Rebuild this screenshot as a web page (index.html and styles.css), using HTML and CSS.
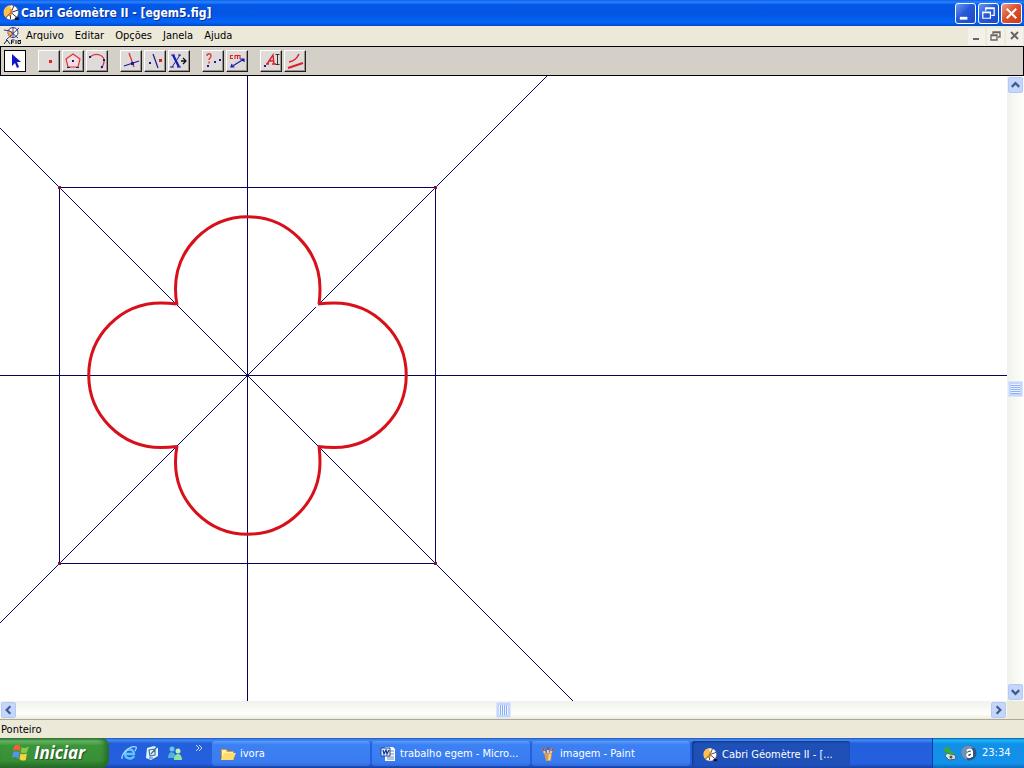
FILE: index.html
```html
<!DOCTYPE html>
<html lang="pt-BR">
<head>
<meta charset="utf-8">
<title>Cabri Géomètre II - [egem5.fig]</title>
<link rel="stylesheet" href="styles.css">
</head>
<body>
<svg class="defs" aria-hidden="true">
  <defs>
    <symbol id="cabri" viewBox="0 0 18 18">
      <circle cx="9" cy="8.500" r="7.500" fill="#fff" stroke="#5a4a60" stroke-width=".6"/>
      <path d="M8.500 2C4 2 2 5 2 8.500c0 2 1 4 2 5L9 9z" fill="#ffc04a"/>
      <path d="M9 8.500L12 1.500M9 8.500L3.500 14M9 8.500l7-2.500M9 8.500l6 5M8.500 8.500V15" stroke="#2b1730" stroke-width=".9"/>
      <path d="M9 5v5l-2 2" fill="none" stroke="#e28a25" stroke-width="1.500"/>
      <path d="M13 13.500h4v2.500h-4z" fill="#171320"/>
    </symbol>
    <symbol id="chevron" viewBox="0 0 14 14"><path d="M3 9l4-4 4 4" fill="none" stroke="#405b90" stroke-width="2.400"/></symbol>
  </defs>
</svg>
<div class="screen">
  <header class="titlebar">
    <svg class="icon18"><use href="#cabri"/></svg>
    <h1 class="title">Cabri Géomètre II - [egem5.fig]</h1>
    <div class="winbuttons">
      <button class="winbtn" aria-label="Minimizar"><svg viewBox="0 0 20 20"><path d="M4 15h8" stroke="#fff" stroke-width="3"/></svg></button>
      <button class="winbtn" aria-label="Restaurar"><svg viewBox="0 0 20 20"><path d="M7 7V4h9v8h-3M7 5h9" fill="none" stroke="#fff" stroke-width="1.300"/><path d="M4 8.500h8V15H4zM4 9h8" fill="none" stroke="#fff" stroke-width="1.300"/></svg></button>
      <button class="winbtn close" aria-label="Fechar"><svg viewBox="0 0 20 20"><path d="M5 5l10 10M15 5L5 15" stroke="#fff" stroke-width="2.200"/></svg></button>
    </div>
  </header>

  <nav class="menubar" aria-label="Menu">
    <svg class="icon18" viewBox="0 0 18 18">
      <circle cx="10" cy="5.500" r="5" fill="#fffbe0" stroke="#33339a"/>
      <path d="M5 4h4v5H6z" fill="#ffae35"/>
      <path d="M1 3l6 1 8 7M16 1L3 13M10 1v9" fill="none" stroke="#202090" stroke-width=".9"/>
      <path d="M1 17l3-4 3 4M8.500 17v-4h3M8 15h3M13 13v4M18 13.500h-3v3h2.500v-2h-1" fill="none" stroke="#15152a"/>
    </svg>
    <div class="menus">
      <button class="menu">Arquivo</button>
      <button class="menu">Editar</button>
      <button class="menu">Opções</button>
      <button class="menu">Janela</button>
      <button class="menu">Ajuda</button>
    </div>
    <div class="docbuttons">
      <button class="docbtn" aria-label="Minimizar documento"><svg viewBox="0 0 16 16"><path d="M5 11h6" stroke="#666" stroke-width="2"/></svg></button>
      <button class="docbtn" aria-label="Restaurar documento"><svg viewBox="0 0 16 16"><path d="M6 6V4h7v5h-2M6 4.500h7" fill="none" stroke="#666" stroke-width="1.300"/><path d="M4 7h6v5H4zM4 7.500h6" fill="none" stroke="#666" stroke-width="1.300"/></svg></button>
      <button class="docbtn" aria-label="Fechar documento"><svg viewBox="0 0 16 16"><path d="M5 4l7 7M12 4l-7 7" stroke="#666" stroke-width="2"/></svg></button>
    </div>
  </nav>

  <div class="toolbar" role="toolbar" aria-label="Ferramentas">
    <div class="group">
      <button class="tool active" aria-label="Ponteiro"><svg viewBox="0 0 20 20"><path d="M7 3v12l3-3 2 5 2-1-2-5h4z" fill="#1414c8"/></svg></button>
    </div>
    <div class="group">
      <button class="tool" aria-label="Ponto"><svg viewBox="0 0 20 20"><path d="M10 9h3v3h-3z" fill="#e0202a"/></svg></button>
      <button class="tool" aria-label="Polígono"><svg viewBox="0 0 20 20"><path d="M10 3l7 5-2 8H5L3 8z" fill="#f6dede" stroke="#e0303a" stroke-width="1.200"/><path d="M9 9h2v2H9zM4 16h3v1H4zM13 16h3v1h-3z" fill="#1a1a90"/></svg></button>
      <button class="tool" aria-label="Arco"><svg viewBox="0 0 20 20"><path d="M3 6c6-5 15-2 14 5 0 3-1 4-3 6" fill="none" stroke="#e0303a" stroke-width="1.300"/><path d="M2 5h2v2H2zM16 8h2v2h-2zM14 15h2v2h-2z" fill="#1a1a90"/></svg></button>
    </div>
    <div class="group">
      <button class="tool" aria-label="Reta perpendicular"><svg viewBox="0 0 20 20"><path d="M8 2l5 14" stroke="#e0303a" stroke-width="1.300"/><path d="M3 15l15-5" stroke="#1a1a9a" stroke-width="1.300"/><path d="M10 11h3v3h-3z" fill="#1a1a9a"/></svg></button>
      <button class="tool" aria-label="Simetria"><svg viewBox="0 0 20 20"><path d="M8 3l5 14" stroke="#1a1a9a" stroke-width="1.200"/><path d="M4 11h2v2H4z" fill="#1a1a9a"/><path d="M14 8h3v3h-3z" fill="#e0202a"/></svg></button>
      <button class="tool" aria-label="Macro"><svg viewBox="0 0 20 20"><path d="M4 4l6 12" stroke="#1a1ab4" stroke-width="2.200"/><path d="M11 4L3 16M2 4h4M9 4h3M1 16h4M8 16h4" stroke="#1a1ab4"/><path d="M12 10h5M14 7l3 3-3 3" fill="none" stroke="#111" stroke-width="1.300"/></svg></button>
    </div>
    <div class="group">
      <button class="tool" aria-label="Propriedade"><svg viewBox="0 0 20 20"><path d="M4 5c0-3 4-3 4 0 0 2-2 2-2 4M6 10.500v2" fill="none" stroke="#dc4040" stroke-width="1.400"/><path d="M4 14h2v2H4zM11 10h2v2h-2zM16 8h2v2h-2z" fill="#1a1a9a"/></svg></button>
      <button class="tool" aria-label="Medida"><svg viewBox="0 0 20 20"><path d="M6 4.500H3.500v3H6M8 8V4.500h5V8M10.500 4.500V8" fill="none" stroke="#e0202a" stroke-width="1.100"/><path d="M4 16L17 8M5 13l-1 3h3.500M13 8h4v3" fill="none" stroke="#1a1aaa" stroke-width="1.200"/></svg></button>
    </div>
    <div class="group">
      <button class="tool" aria-label="Rótulo"><svg viewBox="0 0 20 20"><path d="M6 13l6-9 1 9M8 10h5M5 13h3M11 13h4" fill="none" stroke="#dc202a" stroke-width="1.400"/><path d="M14.500 3.500h4M16.500 3.500v10M14.500 13.500h4" stroke="#333"/><path d="M3 14h2v2H3z" fill="#1a1a9a"/></svg></button>
      <button class="tool" aria-label="Aparência"><svg viewBox="0 0 20 20"><path d="M4 11c6-1 8-4 10-8" fill="none" stroke="#dc202a" stroke-width="1.600"/><path d="M3 17l15-5" stroke="#dc202a" stroke-width="2"/></svg></button>
    </div>
  </div>

  <main class="workspace">
    <svg class="figure" role="img" aria-label="Quadrifólio inscrito em um quadrado">
      <g class="construction">
        <path d="M247.500 0V4000M0 299.500H4000M59.500 111.500h376v376h-376z"/>
        <path d="M0 52L3000 3052M0 547L547 0"/>
      </g>
      <path class="vertices" d="M58 110h3v3h-3zM434 110h3v3h-3zM58 486h3v3h-3zM434 486h3v3h-3z"/>
      <path class="gap" d="M316 231L319 228"/>
      <path class="clover" d="M177 229Q175.500 221 175.500 213A72 72 0 0 1 320 213Q320 221 319 228M318 228Q326 227 334 227A72 72 0 0 1 334 371.500Q326 371.500 318 370.500M319 370Q320 378 320 386A72 72 0 0 1 175.500 386Q175.500 378 177 370M177 370.500Q169 371.500 161 371.500A72 72 0 0 1 161 227Q169 227 177 228"/>
    </svg>
    <div class="scroll vertical">
      <button class="scrollbtn" aria-label="Rolar para cima"><svg><use href="#chevron"/></svg></button>
      <div class="thumb"></div>
      <button class="scrollbtn down" aria-label="Rolar para baixo"><svg><use href="#chevron"/></svg></button>
    </div>
    <div class="scroll horizontal">
      <button class="scrollbtn left" aria-label="Rolar para a esquerda"><svg><use href="#chevron"/></svg></button>
      <div class="thumb"></div>
      <button class="scrollbtn right" aria-label="Rolar para a direita"><svg><use href="#chevron"/></svg></button>
    </div>
    <div class="corner"></div>
  </main>

  <div class="status" role="status">Ponteiro</div>

  <footer class="taskbar">
    <button class="start">
      <svg class="flag" viewBox="0 0 18 18"><path d="M3 3c2-2 4-2 6 0L8 8C6 6 4 6 2 8z" fill="#f26131"/><path d="M10 4c2 1 4 1 7-1l-2 6c-2 1-4 1-6 0z" fill="#87c94b"/><path d="M2 9c2-2 4-1 6 0l-1 6c-2-2-4-2-6-1z" fill="#5b91ee"/><path d="M9 10c2 1 4 1 6 0l-1 6c-2 1-5 1-6-1z" fill="#fbd23f"/></svg>
      <span>Iniciar</span>
    </button>
    <div class="quick">
      <button class="quickbtn" aria-label="Internet Explorer"><svg viewBox="0 0 16 16"><path d="M13 11c-2 4-9 3-9-2 0-6 9-6 9 0H4" fill="none" stroke="#65c5fb" stroke-width="2.300"/><path d="M1 14C0 9 9 0 15 2c1 1 0 2-1 4" fill="none" stroke="#a6e2ff" stroke-width="1.200"/></svg></button>
      <button class="quickbtn" aria-label="Área de trabalho"><svg viewBox="0 0 16 16"><path d="M3 3l7-2 4 2v8l-7 4-5-2z" fill="#e8f4fd"/><path d="M5 5l6-1v6l-5 1zM7 9l6-7M5 13h4" fill="none" stroke="#36749f" stroke-width="1.200"/></svg></button>
      <button class="quickbtn" aria-label="Messenger"><svg viewBox="0 0 16 16"><circle cx="5" cy="4" r="2.500" fill="#64c7ee"/><path d="M1 13c0-8 7-8 8 0z" fill="#50b2d9"/><circle cx="11" cy="6" r="2.500" fill="#c0f1ad"/><path d="M7 15c0-8 8-8 8 0z" fill="#91e2a0"/></svg></button>
      <button class="more" aria-label="Mais itens"><svg viewBox="0 0 8 6"><path d="M1 0l3 3-3 3M4 0l3 3-3 3" fill="none" stroke="#c8dcff"/></svg></button>
    </div>
    <div class="tasks">
      <button class="task"><svg viewBox="0 0 16 16"><path d="M1 3h5l2 2h6v9H1z" fill="#d99b27"/><path d="M2 4h4l1 2h6v7H2z" fill="#fff0a2"/><path d="M4 7h12l-3 7H1z" fill="#ffdc6b"/></svg><span>ivora</span></button>
      <button class="task"><svg viewBox="0 0 16 16"><path d="M5 1h8l2 2v12H5z" fill="#fff"/><path d="M10 5h4M10 8h4M7 11h7M7 13h7" stroke="#6d87b4"/><path d="M1 2h9v8H1z" fill="#e4eeff" stroke="#204b9c"/><path d="M3 4l1 4 2-4 1 4 2-4" fill="none" stroke="#173d8e" stroke-width="1.300"/></svg><span>trabalho egem - Micro...</span></button>
      <button class="task"><svg viewBox="0 0 16 16"><path d="M5 8L3 2M8 8V1M10 8l3-6" stroke="#e9d09a" stroke-width="2"/><path d="M3 2l1 3M8 1v3M13 2l-1 3" stroke="#ac4e3c" stroke-width="2"/><path d="M4 7h8l-1 8H6z" fill="#d99b55"/><path d="M10 8l-1 6" stroke="#f3d69e" stroke-width="2"/></svg><span>imagem - Paint</span></button>
      <button class="task current"><svg><use href="#cabri"/></svg><span>Cabri Géomètre II - [...</span></button>
    </div>
    <div class="tray">
      <svg class="icon16" viewBox="0 0 16 16"><path d="M5 8l8 2 1 4-7 1-4-4z" fill="#d9e1dc" stroke="#48686a"/><path d="M2 3l5-1 1 3 4 3-4 2-2-3-3 1z" fill="#36ad32"/><circle cx="9" cy="12" r="1.500" fill="#425662"/></svg>
      <svg class="icon16" viewBox="0 0 16 16"><circle cx="8" cy="8" r="7.500" fill="#315482"/><path d="M1 4c4-5 9-4 12-1-6 0-8 5-7 12C1 13-1 9 1 4z" fill="#768fb0"/><path d="M6 6c2-2 5-2 5 1v5M11 8c-6-1-6 5-2 4l2-2" fill="none" stroke="#fff" stroke-width="2"/></svg>
      <time class="clock">23:34</time>
    </div>
  </footer>
</div>
</body>
</html>
```
FILE: styles.css
```css
* { box-sizing: border-box; }
body {
  margin: 0;
  font: 11px/14px Tahoma, "DejaVu Sans Condensed", "DejaVu Sans", sans-serif;
  color: #000;
}
button { margin: 0; padding: 0; border: 0; background: none; font: inherit; color: inherit; }
svg { display: block; flex: none; }
.defs { position: absolute; width: 0; height: 0; }
.icon16 { width: 16px; height: 16px; }
.icon18 { width: 18px; height: 18px; }
.screen { display: flex; flex-direction: column; height: 100vh; overflow: hidden; }

.titlebar {
  display: flex; align-items: center; flex: none; height: 26px; padding: 0 2px;
  background: linear-gradient(#0a62ee 0, #2b83ff 8%, #0557e5 18%, #0455e3 55%, #0466fb 85%, #0348c4);
}
.title {
  flex: 1; margin: 0; padding-left: 1px; color: #fff; text-shadow: 1px 1px #0a2e8c;
  font: bold 12px/16px "Trebuchet MS", "DejaVu Sans Condensed", "DejaVu Sans", sans-serif;
}
.winbuttons { display: flex; gap: 2px; }
.winbtn {
  width: 21px; height: 21px; border: 1px solid #fff; border-radius: 3px;
  background: linear-gradient(135deg, #6f98ee, #2659d9 45%, #1a49c9);
}
.winbtn svg { width: 19px; height: 19px; }
.winbtn.close { background: linear-gradient(135deg, #f09a82, #dc5130 45%, #c93c18); }

.menubar { display: flex; align-items: center; flex: none; height: 20px; padding: 0 1px 0 3px; background: #ece9d8; }
.menus { display: flex; flex: 1; gap: 11px; padding-left: 5px; }
.docbuttons { display: flex; gap: 2px; }
.docbtn { width: 17px; height: 17px; background: #f3f1e9; }
.docbtn svg { width: 16px; height: 16px; }

.toolbar {
  display: flex; align-items: center; gap: 12px; flex: none; height: 30px; padding: 0 3px;
  border: 1px solid #000; background: #d4d0c8;
}
.group { display: flex; gap: 2px; }
.tool {
  width: 22px; height: 22px; padding: 0; background: #dedbd8;
  border: 1px solid; border-color: #fff #202020 #202020 #fff;
  box-shadow: inset -1px -1px #969390;
}
.tool svg { width: 20px; height: 20px; }
.tool.active { border-color: #000; background: #fff; box-shadow: none; }

.workspace { display: grid; grid-template: minmax(0, 1fr) 18px / minmax(0, 1fr) 17px; flex: 1; min-height: 0; }
.figure { width: 100%; height: 100%; background: #fff; overflow: hidden; }
.construction { fill: none; stroke: #04045c; stroke-width: 1; shape-rendering: crispEdges; }
.vertices { fill: #8a1230; }
.gap { stroke: #fff; stroke-width: 3; }
.clover { fill: none; stroke: #d8101a; stroke-width: 3; }
.scroll { display: flex; align-items: center; justify-content: space-between; }
.vertical { flex-direction: column; padding: 1px 0; background: linear-gradient(90deg, #f1f1ec, #fefefc); }
.horizontal { padding: 0 1px; background: linear-gradient(#f1f1ee, #fefefb 75%, #edecda); }
.scrollbtn, .thumb { width: 15px; height: 16px; border: 1px solid #b3c8f5; border-radius: 2px; background: #c5d6fc; }
.scrollbtn svg { width: 13px; height: 14px; }
.down svg { transform: rotate(180deg); }
.left svg { transform: rotate(-90deg); }
.right svg { transform: rotate(90deg); }
.thumb { border: 3px solid #c5d6fc; outline: 1px solid #dce6fc; outline-offset: -1px; }
.vertical .thumb { background: repeating-linear-gradient(#eef4fe 0 1px, #8cb0f8 1px 2px); }
.horizontal .thumb { background: repeating-linear-gradient(90deg, #eef4fe 0 1px, #8cb0f8 1px 2px); }
.corner { background: #ece9d8; }

.status { flex: none; height: 19px; padding: 3px 1px 1px; border-top: 1px solid #aaa899; background: #ece9d8; }

.taskbar {
  display: flex; flex: none; height: 30px; color: #fff;
  background: linear-gradient(#2153c1 0, #3f8cf3 7%, #245edb 18%, #2360df 85%, #1941a5);
}
.start {
  display: flex; align-items: center; gap: 4px; width: 109px; padding: 0 0 1px 11px;
  border-radius: 0 8px 8px 0;
  background: linear-gradient(#347a33 0, #68b966 10%, #3c953b 25%, #388f36 75%, #256b28);
  box-shadow: inset -4px 0 5px #276b2b;
  font: italic bold 17px/20px "Franklin Gothic Medium", "Open Sans", sans-serif;
  text-shadow: 1px 1px 1px #204d20;
}
.flag { width: 19px; height: 19px; }
.quick { display: flex; align-items: center; width: 103px; padding-left: 12px; gap: 7px; }
.quickbtn svg { width: 16px; height: 16px; }
.more { align-self: flex-start; margin: 7px 0 0 5px; }
.more svg { width: 8px; height: 6px; }
.tasks { display: flex; flex: 1; gap: 2px; min-width: 0; padding: 3px 0 2px; }
.task {
  display: flex; align-items: center; gap: 4px; flex: 0 1 158px; min-width: 0; padding: 0 8px;
  border-radius: 3px; background: linear-gradient(#5c9bfb 0, #3c81f3 15%, #3a7cf0 85%, #2f6bdc);
  white-space: nowrap;
}
.task svg { width: 16px; height: 16px; }
.task span { overflow: hidden; }
.task.current { padding: 2px 8px 0 10px; background: #1e50b8; box-shadow: inset 1px 1px 2px #123577; }
.tray {
  display: flex; align-items: center; gap: 3px; width: 92px; padding-left: 9px;
  border-left: 1px solid #0b3f9e;
  background: linear-gradient(#0c59b9 0, #19b9f3 7%, #1290e8 20%, #1291ea 85%, #0d69ba);
}
.clock { padding-left: 2px; }
```
